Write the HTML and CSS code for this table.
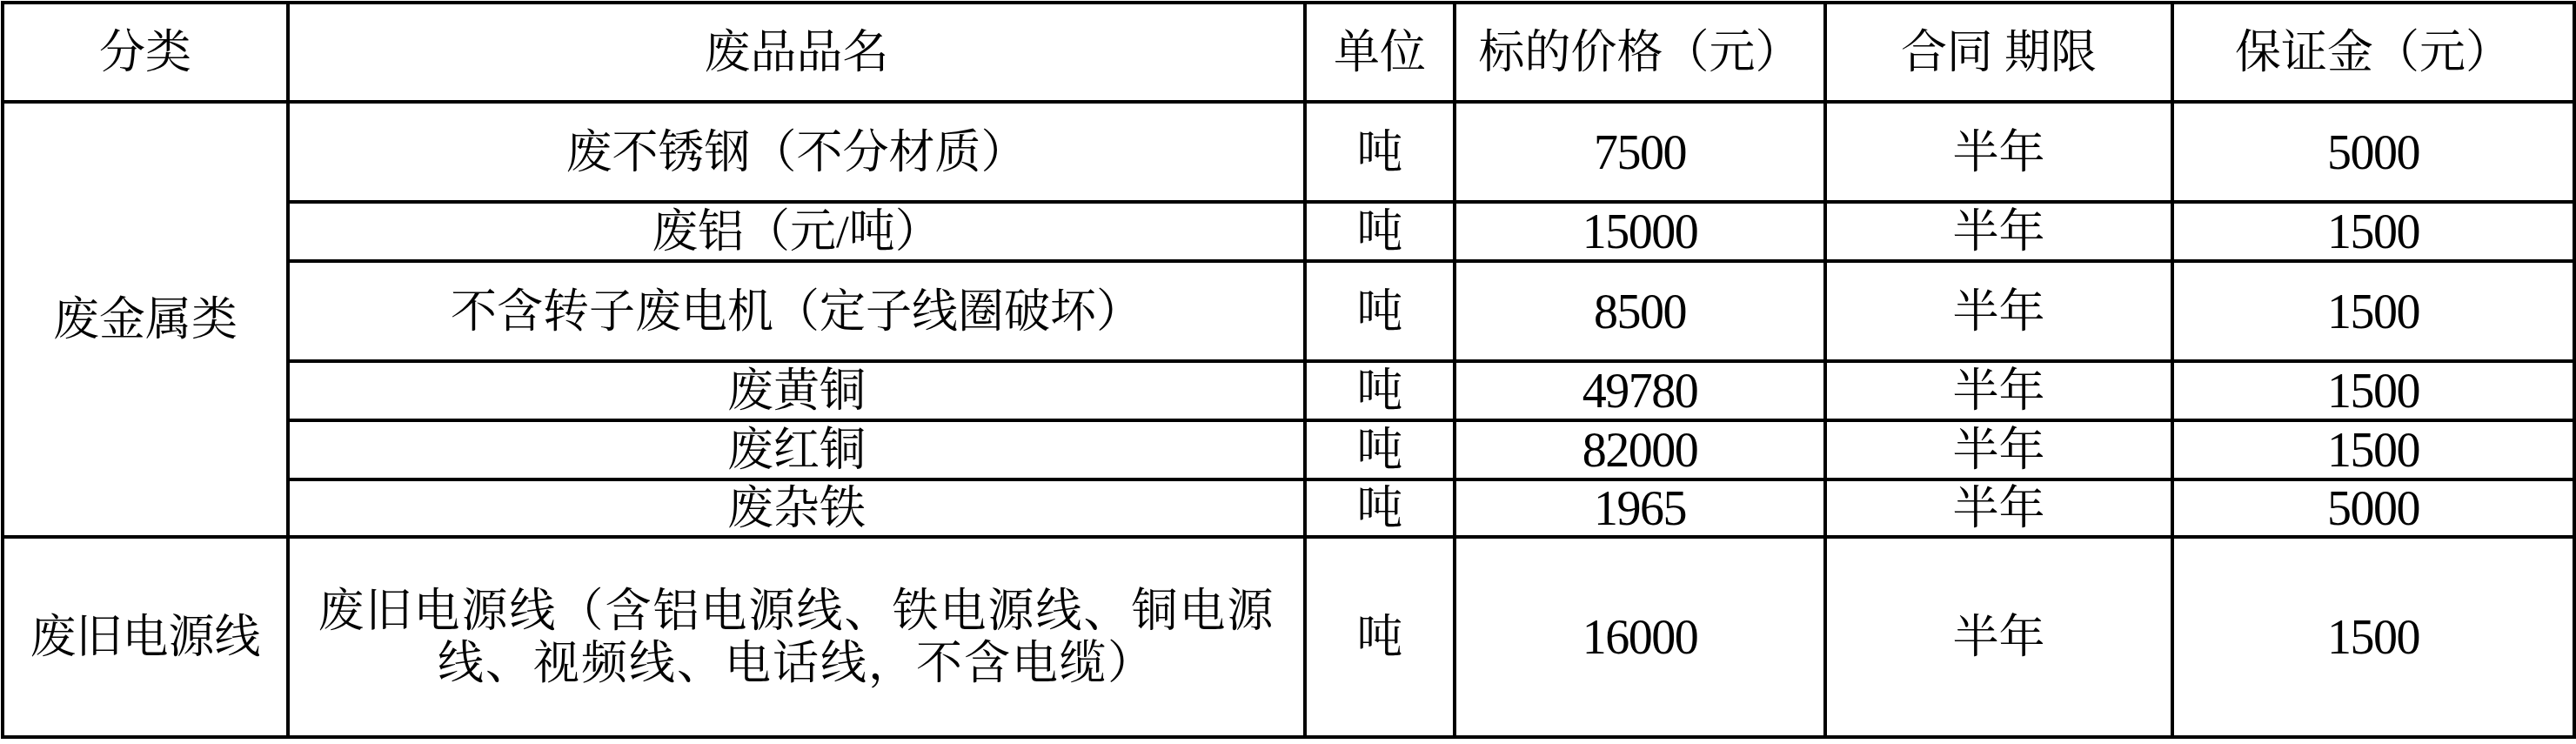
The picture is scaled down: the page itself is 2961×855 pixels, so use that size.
FILE: index.html
```html
<!DOCTYPE html>
<html lang="zh-CN">
<head>
<meta charset="utf-8">
<title>废品标的</title>
<link rel="stylesheet" href="styles.css">
</head>
<body>
<table class="grid">
  <colgroup>
    <col class="c1"><col class="c2"><col class="c3"><col class="c4"><col class="c5"><col class="c6">
  </colgroup>
  <tr class="h-head">
    <td>分类</td><td>废品品名</td><td>单位</td><td>标的价格（元）</td><td>合同 期限</td><td>保证金（元）</td>
  </tr>
  <tr class="h-tall">
    <td rowspan="6">废金属类</td><td>废不锈钢（不分材质）</td><td>吨</td><td class="num">7500</td><td>半年</td><td class="num">5000</td>
  </tr>
  <tr class="h-short">
    <td>废铝（元/吨）</td><td>吨</td><td class="num">15000</td><td>半年</td><td class="num">1500</td>
  </tr>
  <tr class="h-tall">
    <td>不含转子废电机（定子线圈破坏）</td><td>吨</td><td class="num">8500</td><td>半年</td><td class="num">1500</td>
  </tr>
  <tr class="h-short">
    <td>废黄铜</td><td>吨</td><td class="num">49780</td><td>半年</td><td class="num">1500</td>
  </tr>
  <tr class="h-short">
    <td>废红铜</td><td>吨</td><td class="num">82000</td><td>半年</td><td class="num">1500</td>
  </tr>
  <tr class="h-short2">
    <td>废杂铁</td><td>吨</td><td class="num">1965</td><td>半年</td><td class="num">5000</td>
  </tr>
  <tr class="h-last">
    <td>废旧电源线</td><td class="multi">废旧电源线（含铝电源线、铁电源线、铜电源<br>线、视频线、电话线，不含电缆）</td><td>吨</td><td class="num">16000</td><td>半年</td><td class="num">1500</td>
  </tr>
</table>
</body>
</html>
```

FILE: styles.css
```css
html, body {
  margin: 0;
  padding: 0;
  background: #ffffff;
}

body {
  padding: 1px 0 0 1px;
}

.grid {
  border-collapse: collapse;
  table-layout: fixed;
  width: 2956px;
  font-family: "Liberation Serif", "Noto Serif CJK SC", "Noto Sans CJK SC", serif;
  font-size: 53px;
  color: #000000;
}

.grid td {
  border: 4px solid #000000;
  padding: 0;
  text-align: center;
  vertical-align: middle;
  line-height: 60px;
  white-space: nowrap;
}

.grid td.num {
  font-size: 56px;
  letter-spacing: -1.5px;
}

.grid td.multi {
  letter-spacing: 2px;
}

.c1 { width: 328px; }
.c2 { width: 1169px; }
.c3 { width: 172px; }
.c4 { width: 426px; }
.c5 { width: 399px; }
.c6 { width: 462px; }

.h-head td { height: 110px; }
.h-tall td { height: 111px; }
.h-short td { height: 64px; }
.h-short2 td { height: 62px; }
.h-last td { height: 226px; }
```
